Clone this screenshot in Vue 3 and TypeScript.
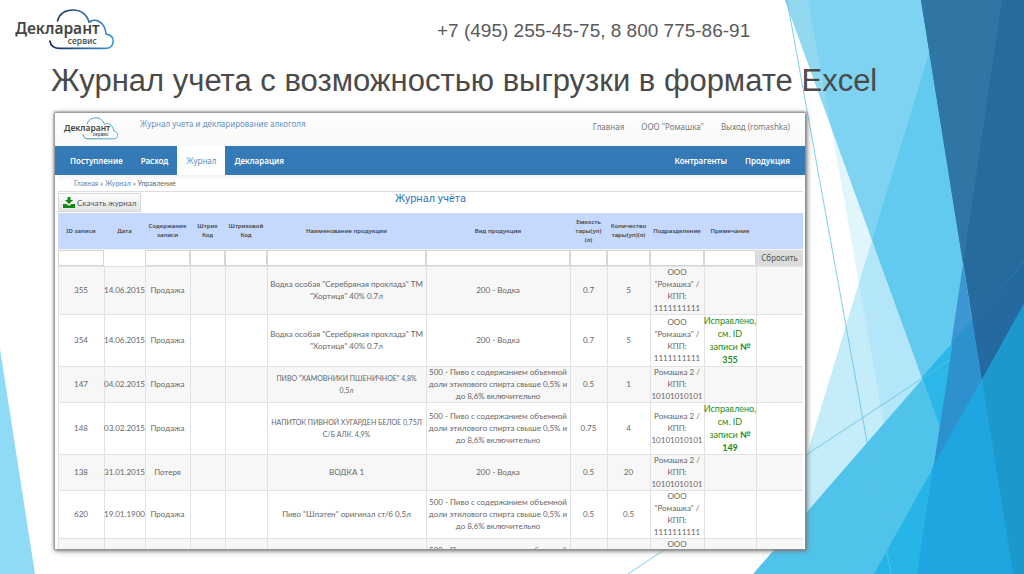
<script setup lang="ts">
interface Entry {
  id: string
  date: string
  kind: string
  name: string[]
  type: string[]
  volume: string
  amount: string
  unit: string[]
  fixedBy?: string
}

interface Column {
  key: string
  lines: string[]
}

const columns: Column[] = [
  { key: 'id', lines: ['ID записи'] },
  { key: 'date', lines: ['Дата'] },
  { key: 'kind', lines: ['Содержание', 'записи'] },
  { key: 'bar', lines: ['Штрих', 'Код'] },
  { key: 'barcode', lines: ['Штриховой', 'Код'] },
  { key: 'name', lines: ['Наименование продукции'] },
  { key: 'type', lines: ['Вид продукции'] },
  { key: 'volume', lines: ['Емкость', 'тары(уп)', '(л)'] },
  { key: 'amount', lines: ['Количество', 'тары(уп)(л)'] },
  { key: 'unit', lines: ['Подразделение'] },
  { key: 'note', lines: ['Примечание'] },
]

const beer = ['500 - Пиво с содержанием объемной', 'доли этилового спирта свыше 0,5% и', 'до 8,6% включительно']
const vodka = ['200 - Водка']
const silver = ['Водка особая "Серебряная прохлада" ТМ', '"Хортиця" 40% 0.7л']
const unitOne = ['ООО', '"Ромашка" /', 'КПП:', '1111111111']
const unitTwo = ['Ромашка 2 /', 'КПП:', '10101010101']

const entries: Entry[] = [
  { id: '355', date: '14.06.2015', kind: 'Продажа', name: silver, type: vodka, volume: '0.7', amount: '5', unit: unitOne },
  { id: '354', date: '14.06.2015', kind: 'Продажа', name: silver, type: vodka, volume: '0.7', amount: '5', unit: unitOne, fixedBy: '355' },
  { id: '147', date: '04.02.2015', kind: 'Продажа', name: ['ПИВО "ХАМОВНИКИ ПШЕНИЧНОЕ" 4,8%', '0,5л'], type: beer, volume: '0.5', amount: '1', unit: unitTwo },
  { id: '148', date: '03.02.2015', kind: 'Продажа', name: ['НАПИТОК ПИВНОЙ ХУГАРДЕН БЕЛОЕ 0,75Л', 'С/Б АЛК. 4,9%'], type: beer, volume: '0.75', amount: '4', unit: unitTwo, fixedBy: '149' },
  { id: '138', date: '31.01.2015', kind: 'Потеря', name: ['ВОДКА 1'], type: vodka, volume: '0.5', amount: '20', unit: unitTwo },
  { id: '620', date: '19.01.1900', kind: 'Продажа', name: ['Пиво "Шпатен" оригинал ст/б 0,5л'], type: beer, volume: '0.5', amount: '0.5', unit: unitOne },
  { id: '', date: '', kind: '', name: [], type: beer.slice(0, 1), volume: '', amount: '', unit: unitOne.slice(0, 1) },
]

// Long names written in capitals need a smaller size to stay inside their column.
function isWide(name: string[]): boolean {
  const first = name[0] ?? ''
  return first.length > 20 && first === first.toUpperCase()
}
</script>

<template>
  <div class="slide">
    <svg class="backdrop" viewBox="0 0 1024 574" preserveAspectRatio="none" aria-hidden="true">
      <polygon points="0,349 35,574 0,574" fill="#8fdaf4" />
      <polygon points="831,126 993,574 911,574" fill="#e0f5fc" />
      <polygon points="872,240 993,574 771,574" fill="#b2e6f8" />
      <polygon points="859,284 911,574 771,574" fill="#c5ecf9" />
      <polygon points="785,0 1024,0 1024,574 993,574" fill="#7dd3f1" />
      <polygon points="785,0 808,0 831,126" fill="#93d8f1" />
      <polygon points="945,0 1024,0 1024,574 993,574 872,240" fill="#62caee" />
      <polygon points="808,0 945,0 929,53 872,240 831,126" fill="#7dd3f1" />
      <polygon points="921,0 1024,0 1024,574 1013,574" fill="#276b9e" />
      <polygon points="921,0 1002,0 963,264" fill="#2f76a4" />
      <polygon points="963,264 1013,574 917,574" fill="#3b96d1" />
      <polygon points="753,574 1024,262 1024,574" fill="#50c3eb" />
      <polygon points="922,377 1024,262 1024,574 993,574" fill="#2bb8e9" />
      <polygon points="972,320 1024,262 1024,574 1013,574" fill="#24699f" />
      <polygon points="953,341 972,320 1013,574 917,574" fill="#2d91cd" />
      <polygon points="874,574 1024,304 1024,574" fill="#27b4e6" />
      <polygon points="933,466 982,380 1013,574 917,574" fill="#1fa6e0" />
      <polygon points="982,380 1024,304 1024,574 1013,574" fill="#1c98cd" />
      <path d="M787,0 L891,574 M628,574 L806,455 L950,360" fill="none" stroke="#5fc3e2" stroke-opacity="0.8" />
    </svg>

    <svg class="sprite" aria-hidden="true">
      <defs>
        <linearGradient id="cloud-main" gradientUnits="userSpaceOnUse" x1="150" y1="0" x2="345" y2="0">
          <stop offset="0" stop-color="#1c2548" />
          <stop offset="0.4" stop-color="#24568c" />
          <stop offset="1" stop-color="#3f9bd6" />
        </linearGradient>
        <linearGradient id="cloud-small" gradientUnits="userSpaceOnUse" x1="150" y1="0" x2="345" y2="0">
          <stop offset="0" stop-color="#2e7d9c" />
          <stop offset="1" stop-color="#41b3cf" />
        </linearGradient>
        <symbol id="brand" viewBox="40 20 310 130">
          <path
            class="cloud"
            d="M174,62 C180,40 198,29 221,29 C246,29 264,44 269,66 C285,54 316,60 321,102 C336,104 343,113 342,125 C341,139 333,145 319,145 L182,145 C165,145 153,138 151,123"
          />
          <text class="brand-name" x="46" y="103">Декларант</text>
          <text class="brand-sub" x="205" y="132">сервис</text>
        </symbol>
      </defs>
    </svg>

    <header class="top">
      <svg class="logo" role="img" aria-label="Декларант сервис"><use href="#brand" /></svg>
      <p class="phones">+7 (495) 255-45-75, 8 800 775-86-91</p>
    </header>

    <h1 class="headline">Журнал учета с возможностью выгрузки в формате Excel</h1>

    <main class="panel">
      <div class="masthead">
        <svg class="logo small" role="img" aria-label="Декларант сервис"><use href="#brand" /></svg>
        <a class="tagline" href="#">Журнал учета и декларирование алкоголя</a>
        <div class="account">
          <a href="#">Главная</a>
          <a href="#">ООО "Ромашка"</a>
          <a href="#">Выход (romashka)</a>
        </div>
      </div>

      <nav class="tabs">
        <a href="#">Поступление</a>
        <a href="#">Расход</a>
        <a href="#" class="active">Журнал</a>
        <a href="#">Декларация</a>
        <span class="spacer"></span>
        <a href="#">Контрагенты</a>
        <a href="#">Продукция</a>
      </nav>

      <div class="crumbs"><a href="#">Главная</a> » <a href="#">Журнал</a> » Управление</div>

      <div class="toolbar">
        <button type="button" class="download">
          <svg viewBox="0 0 24 22" aria-hidden="true">
            <path d="M9,0 H15 V6 H20 L12,14 L4,6 H9 Z" />
            <path d="M0,14 H7 L12,18 L17,14 H24 V22 H0 Z" />
          </svg>
          Скачать журнал
        </button>
        <h2>Журнал учёта</h2>
      </div>

      <div class="grid">
        <table>
          <colgroup>
            <col v-for="c in columns" :key="c.key" :class="'w-' + c.key" />
            <col class="w-reset" />
          </colgroup>
          <thead>
            <tr class="titles">
              <th v-for="c in columns" :key="c.key" scope="col">
                <span v-for="l in c.lines" :key="l" class="line">{{ l }}</span>
              </th>
              <td></td>
            </tr>
            <tr class="filters">
              <td v-for="c in columns" :key="c.key">
                <input type="text" :class="{ plain: c.key === 'date' }" :aria-label="c.lines.join(' ')" />
              </td>
              <td><button type="button" class="reset">Сбросить</button></td>
            </tr>
          </thead>
          <tbody>
            <tr v-for="(e, i) in entries" :key="i">
              <td>{{ e.id }}</td>
              <td>{{ e.date }}</td>
              <td>{{ e.kind }}</td>
              <td></td>
              <td></td>
              <td :class="{ wide: isWide(e.name) }"><span v-for="l in e.name" :key="l" class="line">{{ l }}</span></td>
              <td><span v-for="l in e.type" :key="l" class="line">{{ l }}</span></td>
              <td>{{ e.volume }}</td>
              <td>{{ e.amount }}</td>
              <td class="unit"><span v-for="l in e.unit" :key="l" class="line">{{ l }}</span></td>
              <td class="note">
                <template v-if="e.fixedBy">
                  <span class="line">Исправлено,</span>
                  <span class="line">см. ID</span>
                  <span class="line">записи <b>№</b></span>
                  <b class="line">{{ e.fixedBy }}</b>
                </template>
              </td>
              <td></td>
            </tr>
          </tbody>
        </table>
      </div>
    </main>
  </div>
</template>

<style>
body {
  margin: 0;
  background: #fff;
}
</style>

<style scoped>
.slide {
  position: relative;
  display: flex;
  flex-direction: column;
  box-sizing: border-box;
  height: 100vh;
  padding-bottom: 25px;
  overflow: hidden;
  font-family: 'Liberation Sans', Arial, sans-serif;
  color: #4a4a4a;
}

.backdrop {
  position: absolute;
  inset: 0;
  width: 100%;
  height: 100%;
}

.sprite {
  position: absolute;
  width: 0;
  height: 0;
}

.top,
.headline,
.panel {
  position: relative;
}

.top {
  display: flex;
  align-items: flex-start;
  height: 60px;
  padding: 7px 0 0 13px;
  box-sizing: border-box;
}

.logo {
  flex: none;
  width: 103px;
  height: 43px;
  --cloud: url(#cloud-main);
}

.logo.small {
  width: 56px;
  height: 24px;
  --cloud: url(#cloud-small);
}

.cloud {
  fill: none;
  stroke: var(--cloud);
  stroke-width: 5;
  stroke-linecap: round;
  stroke-linejoin: round;
}

.brand-name {
  font: 600 47px 'Noto Sans', sans-serif;
  fill: #444;
}

.brand-sub {
  font: 500 26px 'Noto Sans', sans-serif;
  fill: #444;
}

.phones {
  margin: 13px 0 0 321px;
  font-size: 19px;
  line-height: 22px;
  color: #595959;
}

.headline {
  margin: 0 0 11px 51px;
  font-size: 31px;
  font-weight: 400;
  line-height: 42px;
  white-space: nowrap;
}

.panel {
  flex: 1;
  min-height: 0;
  margin: 0 219px 0 55px;
  overflow: hidden;
  background: #fff;
  box-shadow: 0 0 2px 1px #8a8a8a, 1px 1px 5px 1px #777;
  font-family: 'Noto Sans', sans-serif;
  font-size: 8px;
  line-height: 12px;
  color: #666;
}

.panel a {
  text-decoration: none;
}

.masthead {
  display: flex;
  align-items: flex-start;
  box-sizing: border-box;
  height: 33px;
  padding: 3px 15px 0 8px;
  background: linear-gradient(#fff, #f8f8f8);
}

.tagline {
  margin: 2px 0 0 21px;
  color: #6590bd;
}

.account {
  display: flex;
  gap: 17px;
  margin: 5px 0 0 auto;
}

.account a {
  color: #777;
}

.tabs {
  display: flex;
  height: 29px;
  padding: 0 6px;
  background: #337ab7;
  line-height: 29px;
}

.tabs a {
  padding: 0 9px;
  font-weight: 600;
  color: #fff;
}

.tabs .active {
  background: #fff;
  font-weight: 400;
  color: #5b8fc2;
}

.spacer {
  flex: 1;
}

.crumbs {
  height: 16px;
  margin: 0 2px 0 3px;
  padding-left: 16px;
  border-bottom: 1px solid #ddd;
  background: linear-gradient(#f3f3f3, #fff 6px);
  font: 7px/16px Lato, sans-serif;
}

.crumbs a {
  color: #5687b5;
}

.toolbar {
  display: grid;
  grid-template-columns: 1fr auto 1fr;
  align-items: start;
  height: 21px;
  margin: 0 2px 0 3px;
}

.download {
  display: flex;
  align-items: center;
  justify-self: start;
  gap: 2px;
  height: 19px;
  margin-top: 1px;
  padding: 0 4px;
  border: 1px solid #d8d8d8;
  background: linear-gradient(#fff, #e2e2e2);
  font: 8px/12px Lato, sans-serif;
  color: #555;
}

.download svg {
  width: 12px;
  height: 11px;
  fill: #118a11;
}

h2 {
  margin: 0;
  font: 400 11px/14px Roboto, sans-serif;
  color: #337ab7;
}

.grid {
  margin: 0 2px 0 3px;
}

table {
  width: 100%;
  table-layout: fixed;
  border-collapse: separate;
  border-spacing: 0;
  text-align: center;
}

.w-id { width: 46px; }
.w-date { width: 41px; }
.w-kind { width: 45px; }
.w-bar { width: 35px; }
.w-barcode { width: 42px; }
.w-type { width: 144px; }
.w-volume { width: 37px; }
.w-amount { width: 43px; }
.w-unit { width: 54px; }
.w-note { width: 52px; }
.w-reset { width: 47px; }

th,
td {
  padding: 0;
  vertical-align: middle;
  white-space: nowrap;
}

.line {
  display: flex;
  justify-content: center;
  white-space: pre;
}

.titles > * {
  height: 36px;
  background: #c5d9ff;
  box-shadow: inset 1px 0 #cbdcfb;
  font-size: 6px;
  font-weight: 600;
  line-height: 9px;
  color: #444;
}

.filters td {
  height: 17px;
  background: #f3f3f3;
}

.filters input {
  display: block;
  box-sizing: border-box;
  width: 100%;
  height: 16px;
  padding: 0;
  border: 1px solid #d6d6d6;
  border-radius: 0;
  background: #fff;
  font: inherit;
}

.filters .plain {
  border-color: #fff;
}

.reset {
  display: block;
  width: 100%;
  height: 16px;
  padding: 0;
  border: 0;
  background: #dcdcdc;
  font: inherit;
  color: #555;
}

tbody {
  font-family: Lato, sans-serif;
}

tbody td {
  box-shadow: inset 1px 1px #e2e2e2;
}

tbody tr:nth-child(odd) {
  background: #f7f7f7;
}

tbody tr:last-child td {
  height: 24px;
}

tbody tr:last-child .unit {
  vertical-align: top;
}

.wide {
  font-size: 7px;
}

.note {
  font-size: 9px;
  line-height: 13px;
  color: #1c8a1c;
}
</style>
